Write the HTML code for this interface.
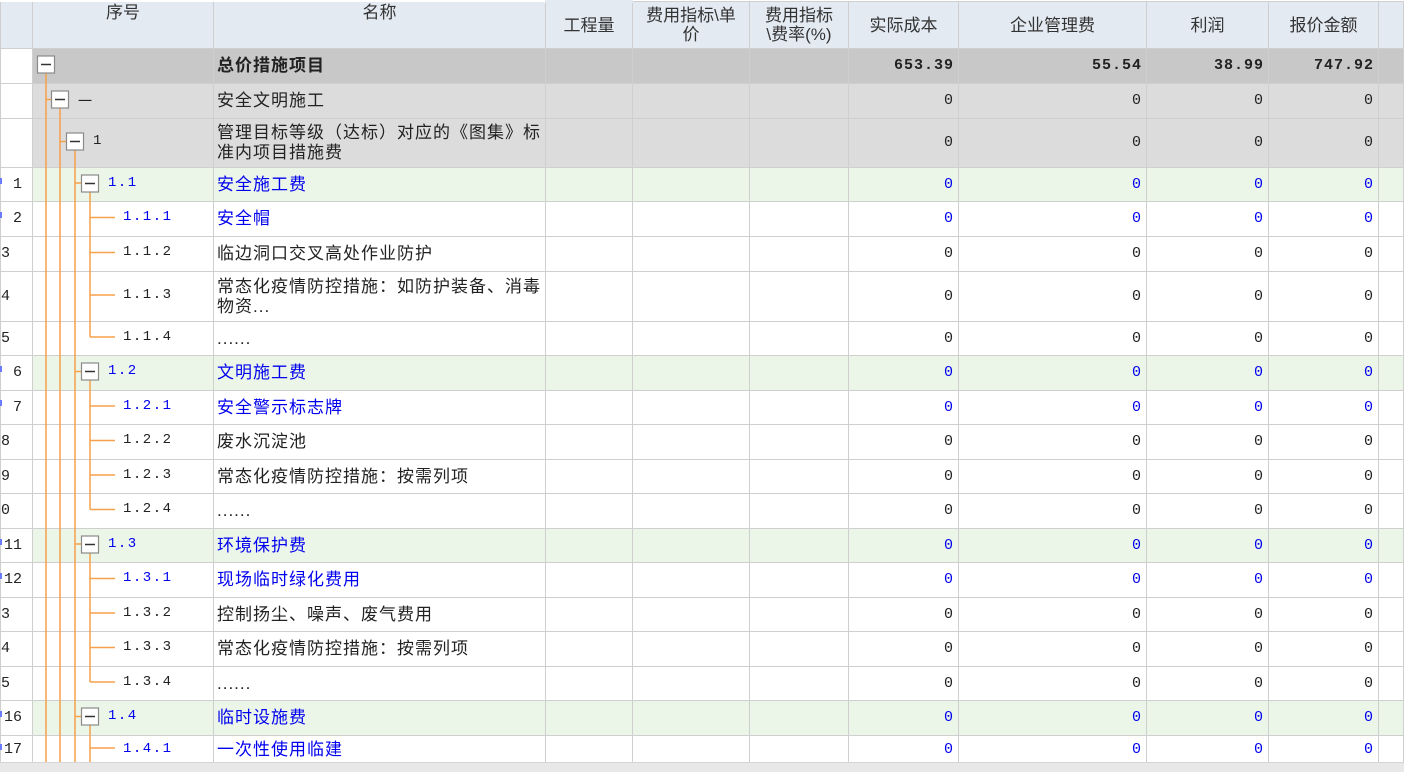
<!DOCTYPE html>
<html><head><meta charset="utf-8"><style>
body{margin:0;width:1404px;height:771px;overflow:hidden;background:#fff;font-family:"Liberation Sans","Noto Sans CJK SC",sans-serif;position:relative}
table{border-collapse:collapse;table-layout:fixed;position:absolute;left:0;top:0;width:1404px}
td{border:1px solid #cfcfcf;padding:0;font-size:17px;color:#222;overflow:hidden;white-space:nowrap;line-height:20px}
td.n{text-align:right;padding-right:4px;font-family:"Liberation Mono","Noto Sans CJK SC",monospace;font-size:15px;letter-spacing:1px}
td.nm{padding-left:3px;white-space:normal;letter-spacing:1px}
td.ln{text-align:right;padding-right:10px;font-family:"Liberation Mono",monospace;font-size:15px}
.g0 td{background:#c8c8c8}.g1 td{background:#dcdcdc}.gr td{background:#ecf6e8}
.b td{color:#0000ee}.b td.ln{color:#222}
th{background:#e4eaf2;border:1px solid #cfcfcf;font-weight:normal;font-size:17px;color:#333;padding:0;line-height:19px;vertical-align:middle}
.bold{font-weight:bold}
.sq{font-family:"Liberation Mono",monospace;font-size:14px;letter-spacing:1.5px;position:absolute}
</style></head><body>
<table>
<colgroup><col style="width:32px"><col style="width:181px"><col style="width:332px"><col style="width:87px"><col style="width:117px"><col style="width:99px"><col style="width:110px"><col style="width:188px"><col style="width:122px"><col style="width:110px"><col></colgroup>
<tr style="height:47px"><th style="vertical-align:top;border-top:none"></th><th style="vertical-align:top;border-top:none;padding-top:1px">序号</th><th style="vertical-align:top;border-top:none;padding-top:1px">名称</th><th style="border-top:3px solid #e4eaf2">工程量</th><th>费用指标\单<br>价</th><th>费用指标<br>\费率(%)</th><th>实际成本</th><th>企业管理费</th><th>利润</th><th>报价金额</th><th></th></tr>
<tr class="g0" style="height:35px"><td style="background:#fff"></td><td></td><td class="nm bold">总价措施项目</td><td></td><td></td><td></td><td class="n bold">653.39</td><td class="n bold">55.54</td><td class="n bold">38.99</td><td class="n bold">747.92</td><td></td></tr>
<tr class="g1" style="height:35px"><td style="background:#fff"></td><td></td><td class="nm">安全文明施工</td><td></td><td></td><td></td><td class="n">0</td><td class="n">0</td><td class="n">0</td><td class="n">0</td><td></td></tr>
<tr class="g1" style="height:49px"><td style="background:#fff"></td><td></td><td class="nm">管理目标等级（达标）对应的《图集》标准内项目措施费</td><td></td><td></td><td></td><td class="n">0</td><td class="n">0</td><td class="n">0</td><td class="n">0</td><td></td></tr>
<tr class="gr b" style="height:34px"><td class="ln" style="background:#fff">1</td><td></td><td class="nm">安全施工费</td><td></td><td></td><td></td><td class="n">0</td><td class="n">0</td><td class="n">0</td><td class="n">0</td><td></td></tr>
<tr class="b" style="height:35px"><td class="ln">2</td><td></td><td class="nm">安全帽</td><td></td><td></td><td></td><td class="n">0</td><td class="n">0</td><td class="n">0</td><td class="n">0</td><td></td></tr>
<tr style="height:35px"><td class="ln" style="text-align:left;padding-left:0">3</td><td></td><td class="nm">临边洞口交叉高处作业防护</td><td></td><td></td><td></td><td class="n">0</td><td class="n">0</td><td class="n">0</td><td class="n">0</td><td></td></tr>
<tr style="height:50px"><td class="ln" style="text-align:left;padding-left:0">4</td><td></td><td class="nm">常态化疫情防控措施：如防护装备、消毒物资...</td><td></td><td></td><td></td><td class="n">0</td><td class="n">0</td><td class="n">0</td><td class="n">0</td><td></td></tr>
<tr style="height:34px"><td class="ln" style="text-align:left;padding-left:0">5</td><td></td><td class="nm">......</td><td></td><td></td><td></td><td class="n">0</td><td class="n">0</td><td class="n">0</td><td class="n">0</td><td></td></tr>
<tr class="gr b" style="height:35px"><td class="ln" style="background:#fff">6</td><td></td><td class="nm">文明施工费</td><td></td><td></td><td></td><td class="n">0</td><td class="n">0</td><td class="n">0</td><td class="n">0</td><td></td></tr>
<tr class="b" style="height:34px"><td class="ln">7</td><td></td><td class="nm">安全警示标志牌</td><td></td><td></td><td></td><td class="n">0</td><td class="n">0</td><td class="n">0</td><td class="n">0</td><td></td></tr>
<tr style="height:35px"><td class="ln" style="text-align:left;padding-left:0">8</td><td></td><td class="nm">废水沉淀池</td><td></td><td></td><td></td><td class="n">0</td><td class="n">0</td><td class="n">0</td><td class="n">0</td><td></td></tr>
<tr style="height:34px"><td class="ln" style="text-align:left;padding-left:0">9</td><td></td><td class="nm">常态化疫情防控措施：按需列项</td><td></td><td></td><td></td><td class="n">0</td><td class="n">0</td><td class="n">0</td><td class="n">0</td><td></td></tr>
<tr style="height:35px"><td class="ln" style="text-align:left;padding-left:0">0</td><td></td><td class="nm">......</td><td></td><td></td><td></td><td class="n">0</td><td class="n">0</td><td class="n">0</td><td class="n">0</td><td></td></tr>
<tr class="gr b" style="height:34px"><td class="ln" style="background:#fff">11</td><td></td><td class="nm">环境保护费</td><td></td><td></td><td></td><td class="n">0</td><td class="n">0</td><td class="n">0</td><td class="n">0</td><td></td></tr>
<tr class="b" style="height:35px"><td class="ln">12</td><td></td><td class="nm">现场临时绿化费用</td><td></td><td></td><td></td><td class="n">0</td><td class="n">0</td><td class="n">0</td><td class="n">0</td><td></td></tr>
<tr style="height:34px"><td class="ln" style="text-align:left;padding-left:0">3</td><td></td><td class="nm">控制扬尘、噪声、废气费用</td><td></td><td></td><td></td><td class="n">0</td><td class="n">0</td><td class="n">0</td><td class="n">0</td><td></td></tr>
<tr style="height:35px"><td class="ln" style="text-align:left;padding-left:0">4</td><td></td><td class="nm">常态化疫情防控措施：按需列项</td><td></td><td></td><td></td><td class="n">0</td><td class="n">0</td><td class="n">0</td><td class="n">0</td><td></td></tr>
<tr style="height:34px"><td class="ln" style="text-align:left;padding-left:0">5</td><td></td><td class="nm">......</td><td></td><td></td><td></td><td class="n">0</td><td class="n">0</td><td class="n">0</td><td class="n">0</td><td></td></tr>
<tr class="gr b" style="height:35px"><td class="ln" style="background:#fff">16</td><td></td><td class="nm">临时设施费</td><td></td><td></td><td></td><td class="n">0</td><td class="n">0</td><td class="n">0</td><td class="n">0</td><td></td></tr>
<tr class="b" style="height:28px"><td class="ln">17</td><td></td><td class="nm">一次性使用临建</td><td></td><td></td><td></td><td class="n">0</td><td class="n">0</td><td class="n">0</td><td class="n">0</td><td></td></tr>
</table>
<div style="position:absolute;left:0;top:762px;width:1404px;height:9px;background:#e8e8e8;border-top:1px solid #d6d6d6"></div>
<svg width="1404" height="771" style="position:absolute;left:0;top:0" fill="none">
<g stroke="#f5a04a" stroke-width="1.5">
<line x1="46" y1="73" x2="46" y2="762"/>
<line x1="46" y1="99.5" x2="51" y2="99.5"/>
<line x1="60" y1="108" x2="60" y2="762"/>
<line x1="60" y1="141.5" x2="66" y2="141.5"/>
<line x1="75" y1="150" x2="75" y2="762"/>
<line x1="75" y1="183" x2="81" y2="183"/><line x1="75" y1="371.5" x2="81" y2="371.5"/><line x1="75" y1="544" x2="81" y2="544"/><line x1="75" y1="716.5" x2="81" y2="716.5"/>
<line x1="90" y1="192" x2="90" y2="337"/><line x1="90" y1="380" x2="90" y2="509.5"/><line x1="90" y1="553" x2="90" y2="682"/><line x1="90" y1="725" x2="90" y2="762"/>
<path d="M90 217.5h25M90 252.5h25M90 295h25M90 337h25M90 406h25M90 440.5h25M90 475h25M90 509.5h25M90 578.5h25M90 613h25M90 647.5h25M90 682h25M90 748h25"/>
</g>
<g fill="#fff" stroke="#8a8a8a" stroke-width="1.2">
<rect x="37.5" y="56" width="17" height="17"/><rect x="51.5" y="91" width="17" height="17"/><rect x="66.5" y="133" width="17" height="17"/>
<rect x="81.5" y="175" width="17" height="17"/><rect x="81.5" y="363" width="17" height="17"/><rect x="81.5" y="536" width="17" height="17"/><rect x="81.5" y="708" width="17" height="17"/>
</g>
<path stroke="#333" stroke-width="1.5" d="M41 64.5h10M55 99.5h10M70 141.5h10M85 183.5h10M85 371.5h10M85 544.5h10M85 716.5h10"/>
<path stroke="#6b7bff" stroke-width="2" d="M1 178v6M1 212v6M1 366v6M1 400v6M1 539v6M1 573v6M1 711v6M1 744v6"/>
</svg>
<div class="sq" style="left:78px;top:91px;color:#222">一</div>
<div class="sq" style="left:93px;top:133px;color:#222">1</div>
<div class="sq" style="left:108px;top:175px;color:#0000ee">1.1</div>
<div class="sq" style="left:108px;top:363px;color:#0000ee">1.2</div>
<div class="sq" style="left:108px;top:536px;color:#0000ee">1.3</div>
<div class="sq" style="left:108px;top:708px;color:#0000ee">1.4</div>
<div class="sq" style="left:123px;top:209px;color:#0000ee">1.1.1</div>
<div class="sq" style="left:123px;top:244px;color:#222">1.1.2</div>
<div class="sq" style="left:123px;top:287px;color:#222">1.1.3</div>
<div class="sq" style="left:123px;top:329px;color:#222">1.1.4</div>
<div class="sq" style="left:123px;top:398px;color:#0000ee">1.2.1</div>
<div class="sq" style="left:123px;top:432px;color:#222">1.2.2</div>
<div class="sq" style="left:123px;top:467px;color:#222">1.2.3</div>
<div class="sq" style="left:123px;top:501px;color:#222">1.2.4</div>
<div class="sq" style="left:123px;top:570px;color:#0000ee">1.3.1</div>
<div class="sq" style="left:123px;top:605px;color:#222">1.3.2</div>
<div class="sq" style="left:123px;top:639px;color:#222">1.3.3</div>
<div class="sq" style="left:123px;top:674px;color:#222">1.3.4</div>
<div class="sq" style="left:123px;top:741px;color:#0000ee">1.4.1</div>
</body></html>
